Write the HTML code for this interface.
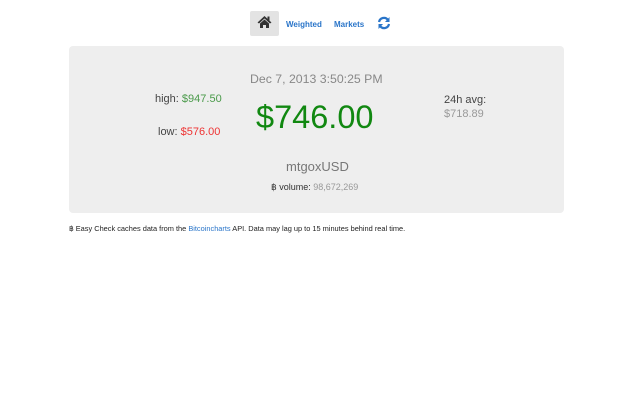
<!DOCTYPE html>
<html><head><style>
body{margin:0;width:640px;height:400px;background:#fff;font-family:"Liberation Sans",sans-serif;position:relative;overflow:hidden}
.a{position:absolute;white-space:nowrap}
</style></head><body>
<div class="a" style="left:250px;top:11px;width:29px;height:25px;background:#e3e3e3;border-radius:2px"></div>
<svg class="a" style="left:257px;top:15px" width="15" height="14" viewBox="0 0 15 14"><path d="M7.5 1 L0.5 7.5 L2 8.5 L7.5 3.5 L13 8.5 L14.5 7.5 Z" fill="#333"/><path d="M3 8.5 L7.5 4.5 L12 8.5 V13 H9 V10 H6 V13 H3 Z" fill="#333"/><rect x="10.5" y="1.5" width="2" height="4" fill="#333"/></svg>
<div class="a" style="left:286px;top:20px;font-size:8px;font-weight:bold;color:#2a75c9">Weighted</div>
<div class="a" style="left:334px;top:20px;font-size:8px;font-weight:bold;color:#2a75c9">Markets</div>
<svg class="a" style="left:377px;top:16px" width="14" height="14" viewBox="0 0 14 14"><path d="M2 6 A5 5 0 0 1 11 4" fill="none" stroke="#2a75c9" stroke-width="2.2"/><path d="M12.5 1 V6 H8 Z" fill="#2a75c9"/><path d="M12 8 A5 5 0 0 1 3 10" fill="none" stroke="#2a75c9" stroke-width="2.2"/><path d="M1.5 13 V8 H6 Z" fill="#2a75c9"/></svg>
<div class="a" style="left:69px;top:46px;width:495px;height:167px;background:#eeeeee;border-radius:4px"></div>
<div class="a" style="left:250px;top:72px;font-size:12.3px;color:#888">Dec 7, 2013 3:50:25 PM</div>
<div class="a" style="left:155px;top:93px;font-size:11px;color:#444">high: <span style="color:#4a9a4a">$947.50</span></div>
<div class="a" style="left:158px;top:126px;font-size:11px;color:#444">low: <span style="color:#e33">$576.00</span></div>
<div class="a" style="left:256px;top:99px;font-size:32.5px;color:#118811">$746.00</div>
<div class="a" style="left:444px;top:93px;font-size:11px;color:#444;line-height:14px">24h avg:<br><span style="color:#999">$718.89</span></div>
<div class="a" style="left:286px;top:159px;font-size:13px;color:#777">mtgoxUSD</div>
<div class="a" style="left:271px;top:182px;font-size:9px;color:#333">฿ volume: <span style="color:#999">98,672,269</span></div>
<div class="a" style="left:69px;top:224px;font-size:7.4px;color:#222">฿ Easy Check caches data from the <span style="color:#2a75c9">Bitcoincharts</span> API. Data may lag up to 15 minutes behind real time.</div>
</body></html>
